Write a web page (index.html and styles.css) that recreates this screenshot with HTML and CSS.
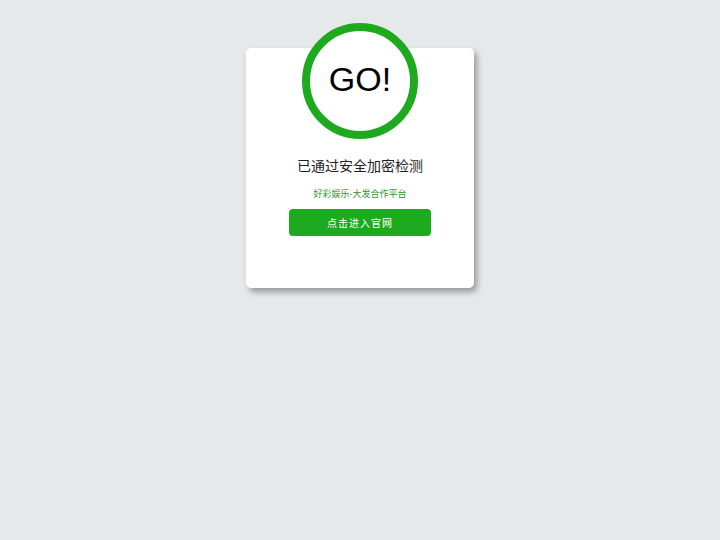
FILE: index.html
```html
<!DOCTYPE html>
<html lang="zh">
<head>
<meta charset="utf-8">
<title>GO</title>
<link rel="stylesheet" href="styles.css">
</head>
<body>
<div class="card">
  <div class="ring"><span class="go">GO!</span></div>
  <div class="title">已通过安全加密检测</div>
  <div class="sub">好彩娱乐-大发合作平台</div>
  <a class="btn" href="#">点击进入官网</a>
</div>
</body>
</html>
```
FILE: styles.css
```css
html, body {
  margin: 0;
  padding: 0;
}
body {
  background: #e5e9ea;
  padding-top: 48px;
  font-family: "Liberation Sans", "Noto Sans CJK SC", sans-serif;
  height: 540px;
  box-sizing: border-box;
}
.card {
  width: 228px;
  height: 240px;
  margin: 0 auto;
  background: #fff;
  border-radius: 5px;
  box-shadow: 3px 4px 6px rgba(0,0,0,0.35);
  display: flex;
  flex-direction: column;
  align-items: center;
  box-sizing: border-box;
}
.ring {
  width: 100px;
  height: 100px;
  border: 8px solid #1eaa1e;
  border-radius: 50%;
  background: #fff;
  margin-top: -25px;
  display: flex;
  align-items: center;
  justify-content: center;
}
.go {
  font-size: 34px;
  color: #000;
  line-height: 1;
  margin-top: -4px;
}
.title {
  margin-top: 17px;
  font-size: 14px;
  line-height: 20px;
  color: #222;
}
.sub {
  margin-top: 11px;
  font-size: 9px;
  line-height: 14px;
  color: #2a9a2a;
}
.btn {
  margin-top: 8px;
  width: 142px;
  height: 27px;
  border-radius: 4px;
  background: #1eaa1e;
  color: #fff;
  font-size: 10px;
  letter-spacing: 1px;
  text-decoration: none;
  display: flex;
  align-items: center;
  justify-content: center;
}
```
